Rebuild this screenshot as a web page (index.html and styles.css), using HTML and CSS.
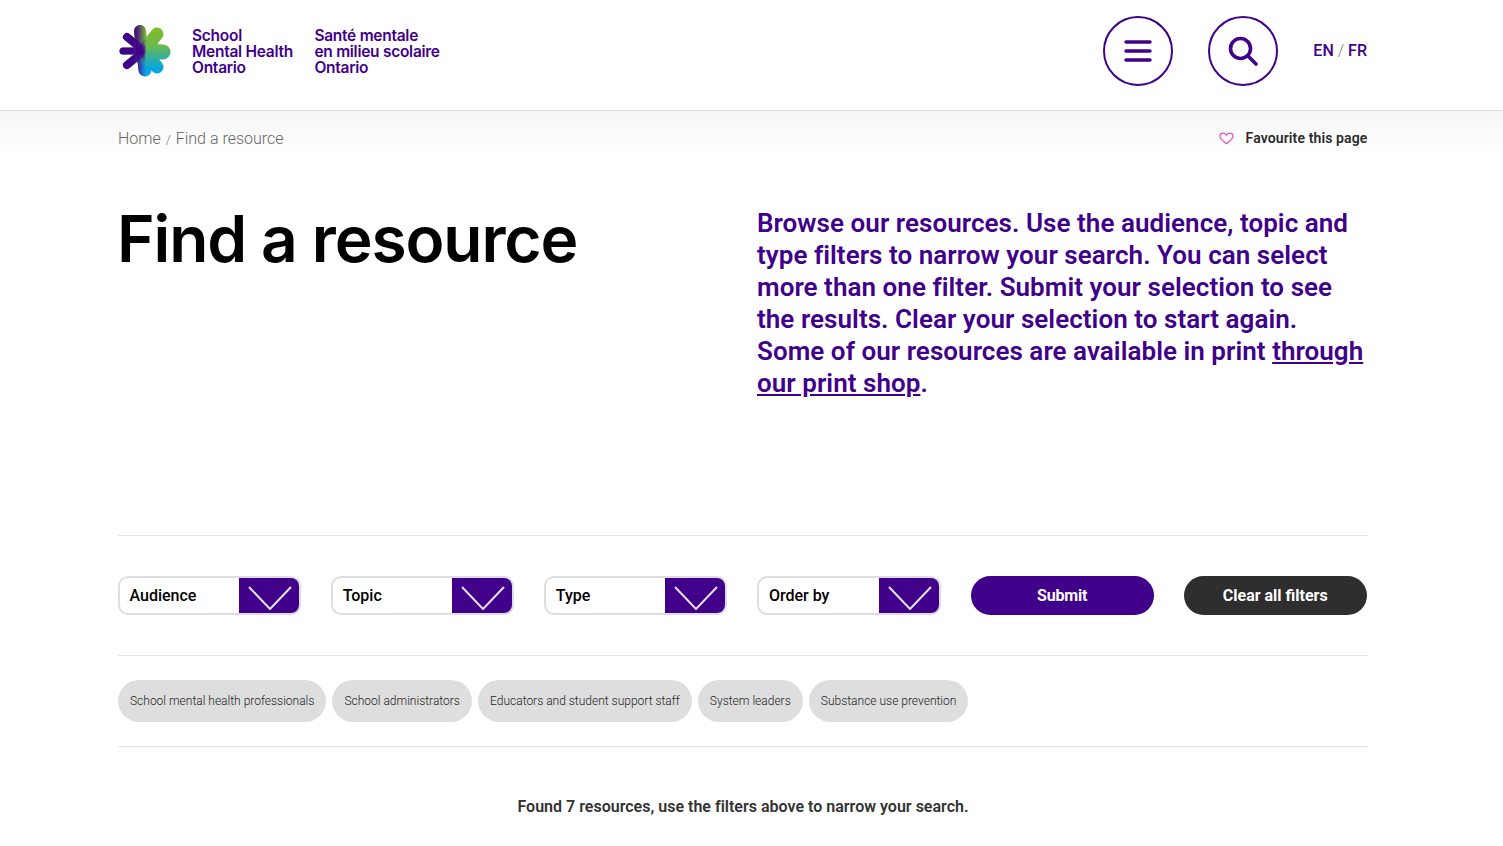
FILE: index.html
```html
<!DOCTYPE html>
<html lang="en">
<head>
<meta charset="utf-8">
<title>Find a resource</title>
<link rel="stylesheet" href="styles.css">
</head>
<body>
<header class="site-header">
  <a class="logo" href="#">
    <svg class="logo-mark" viewBox="0 0 52 52" aria-hidden="true">
      <defs>
        <linearGradient id="lg-base" gradientUnits="userSpaceOnUse" x1="30" y1="0" x2="30" y2="52">
          <stop offset="0" stop-color="#86bd24"/>
          <stop offset="0.4" stop-color="#6cb94a"/>
          <stop offset="0.62" stop-color="#35b09a"/>
          <stop offset="0.82" stop-color="#0ba6dc"/>
          <stop offset="1" stop-color="#0ba6e6"/>
        </linearGradient>
        <linearGradient id="lg-fade" gradientUnits="userSpaceOnUse" x1="0" y1="0" x2="52" y2="0">
          <stop offset="0.26" stop-color="#40008a"/>
          <stop offset="0.36" stop-color="#40008a" stop-opacity="0.8"/>
          <stop offset="0.52" stop-color="#40008a" stop-opacity="0"/>
        </linearGradient>
        <g id="petals" fill="none" stroke-linecap="round">
          <path d="M24 26 L4 26" stroke-width="7"/>
          <path d="M24 25 L8 12" stroke-width="8"/>
          <path d="M24 27 L8 40" stroke-width="8"/>
          <path d="M23 24 L21 6" stroke-width="12"/>
          <path d="M26 24 L38 9" stroke-width="13"/>
          <path d="M26 26 L44 27" stroke-width="15"/>
          <path d="M27 27 L38 42" stroke-width="13"/>
          <path d="M24 27 L26 45" stroke-width="13"/>
        </g>
      </defs>
      <use href="#petals" stroke="url(#lg-base)"/>
      <use href="#petals" stroke="url(#lg-fade)"/>
    </svg>
    <span class="logo-text">School<br>Mental Health<br>Ontario</span>
    <span class="logo-text logo-text-fr">Santé mentale<br>en milieu scolaire<br>Ontario</span>
  </a>
  <nav class="header-actions">
    <button class="round-btn" aria-label="Menu">
      <svg class="round-icon" viewBox="0 0 28 24" aria-hidden="true">
        <path d="M2 3h24M2 12h24M2 21h24" fill="none" stroke="currentColor" stroke-width="3.4" stroke-linecap="round"/>
      </svg>
    </button>
    <button class="round-btn" aria-label="Search">
      <svg class="round-icon search-icon" viewBox="0 0 30 30" aria-hidden="true">
        <circle cx="12.5" cy="12.5" r="10" fill="none" stroke="currentColor" stroke-width="3.6"/>
        <path d="M20 20l8 8" fill="none" stroke="currentColor" stroke-width="3.6" stroke-linecap="round"/>
      </svg>
    </button>
    <div class="lang"><a href="#">EN</a><span class="lang-sep">/</span><a href="#">FR</a></div>
  </nav>
</header>

<div class="crumb-band">
  <div class="crumb-row">
    <div class="crumbs">Home <span class="crumb-sep">/</span> Find a resource</div>
    <a class="favourite" href="#">
      <svg class="heart" viewBox="0 0 16 14" aria-hidden="true">
        <path d="M8 12.6 C3.5 9.4 1 7.3 1 4.6 C1 2.6 2.5 1.2 4.3 1.2 C5.7 1.2 7.1 2 8 3.5 C8.9 2 10.3 1.2 11.7 1.2 C13.5 1.2 15 2.6 15 4.6 C15 7.3 12.5 9.4 8 12.6 Z" fill="none" stroke="#e455bd" stroke-width="1.3"/>
      </svg>
      Favourite this page
    </a>
  </div>
</div>

<main class="page">
  <section class="hero">
    <h1>Find a resource</h1>
    <p class="intro">Browse our resources. Use the audience, topic and type filters to narrow your search. You can select more than one filter. Submit your selection to see the results. Clear your selection to start again. Some of our resources are available in print <a href="#">through our print shop</a>.</p>
  </section>

  <section class="filters">
    <div class="select"><span class="select-label">Audience</span><span class="select-arrow"><svg viewBox="0 0 44 24" aria-hidden="true"><path d="M1 1 L22 23 L43 1" fill="none" stroke="#e8e0f0" stroke-width="2"/></svg></span></div>
    <div class="select"><span class="select-label">Topic</span><span class="select-arrow"><svg viewBox="0 0 44 24" aria-hidden="true"><path d="M1 1 L22 23 L43 1" fill="none" stroke="#e8e0f0" stroke-width="2"/></svg></span></div>
    <div class="select"><span class="select-label">Type</span><span class="select-arrow"><svg viewBox="0 0 44 24" aria-hidden="true"><path d="M1 1 L22 23 L43 1" fill="none" stroke="#e8e0f0" stroke-width="2"/></svg></span></div>
    <div class="select"><span class="select-label">Order by</span><span class="select-arrow"><svg viewBox="0 0 44 24" aria-hidden="true"><path d="M1 1 L22 23 L43 1" fill="none" stroke="#e8e0f0" stroke-width="2"/></svg></span></div>
    <button class="pill pill-primary">Submit</button>
    <button class="pill pill-dark">Clear all filters</button>
  </section>

  <section class="chips">
    <span class="chip">School mental health professionals</span>
    <span class="chip">School administrators</span>
    <span class="chip">Educators and student support staff</span>
    <span class="chip">System leaders</span>
    <span class="chip">Substance use prevention</span>
  </section>

  <p class="result-count">Found 7 resources, use the filters above to narrow your search.</p>
</main>
</body>
</html>
```
FILE: styles.css
```css
* { box-sizing: border-box; }
html, body { margin: 0; padding: 0; background: #fff; overflow: hidden; }
body { font-family: Roboto, "Liberation Sans", sans-serif; color: #333; }
a { color: inherit; text-decoration: none; }

.site-header {
  height: 111px;
  padding: 0 135px 0 118px;
  display: flex;
  align-items: center;
  justify-content: space-between;
  border-bottom: 1px solid #dcdcdc;
}
.logo { display: flex; align-items: center; margin-bottom: 8px; }
.logo-mark { width: 52px; height: 52px; margin-left: 1px; overflow: visible; }
.logo-text {
  margin: 2px 0 0 21px;
  font-family: Inter, "Noto Sans", sans-serif;
  font-weight: 600;
  font-size: 15.5px;
  line-height: 16px;
  letter-spacing: -0.27px;
  color: #40008a;
  white-space: nowrap;
}
.logo-text-fr { margin-left: 21.5px; }

.header-actions { display: flex; align-items: center; margin-bottom: 9px; padding-right: 1px; }
.round-btn {
  width: 70px;
  height: 70px;
  margin-right: 35px;
  padding: 0;
  border: 2px solid #40008a;
  border-radius: 50%;
  background: #fff;
  color: #40008a;
  display: flex;
  align-items: center;
  justify-content: center;
}
.round-icon { width: 28px; height: 24px; }
.search-icon { width: 30px; height: 30px; }
.lang { font-weight: 500; font-size: 16px; color: #40008a; white-space: nowrap; }
.lang-sep { margin: 0 4px; font-weight: 300; color: #777; }

.crumb-band {
  height: 45px;
  padding: 0 135px 0 118px;
  background: linear-gradient(#f6f6f6, #fff);
}
.crumb-row {
  height: 100%;
  padding: 9px 0.5px 0 0;
  display: flex;
  align-items: center;
  justify-content: space-between;
}
.crumbs { font-weight: 300; font-size: 16px; color: #666; }
.crumb-sep { margin: 0 1px; font-size: 13px; color: #777; }
.favourite {
  display: flex;
  align-items: center;
  font-weight: 600;
  font-size: 14px;
  letter-spacing: 0.12px;
  color: #2b2b2b;
}
.heart { width: 15px; height: 13px; margin-right: 12px; }

.page { padding: 0 135px 0 118px; }
.hero {
  height: 380px;
  display: grid;
  grid-template-columns: 639px 1fr;
  border-bottom: 1px solid #e2e2e2;
}
h1 {
  margin: 47px 0 0 -1px;
  font-family: Inter, "Noto Sans", sans-serif;
  font-weight: 600;
  font-size: 64px;
  line-height: 72px;
  letter-spacing: -1.1px;
  color: #000;
  white-space: nowrap;
}
.intro {
  margin: 51px 0 0;
  font-weight: 600;
  font-size: 26px;
  line-height: 32px;
  letter-spacing: 0.05px;
  color: #40008a;
}
.intro a { text-decoration: underline; }

.filters {
  height: 120px;
  padding-right: 1.2px;
  display: grid;
  grid-template-columns: repeat(6, 1fr);
  column-gap: 30px;
  align-items: center;
  border-bottom: 1px solid #e2e2e2;
}
.select {
  height: 39px;
  display: flex;
  justify-content: space-between;
  border: 2px solid #dfdce4;
  border-radius: 10px;
  background: #fff;
  overflow: hidden;
}
.select-label {
  padding-left: 9.5px;
  font-weight: 500;
  font-size: 16px;
  line-height: 35px;
  color: #000;
}
.select-arrow {
  width: 60px;
  background: #40008a;
  display: flex;
  align-items: center;
  justify-content: center;
  padding: 4px 0 0 2px;
}
.select-arrow svg { width: 44px; height: 24px; }
.pill {
  height: 39px;
  border: 0;
  border-radius: 20px;
  color: #fff;
  font-family: Roboto, "Liberation Sans", sans-serif;
  font-weight: 700;
  font-size: 16px;
}
.pill-primary { background: #40008a; letter-spacing: -0.2px; }
.pill-dark { background: #2e2e2e; }

.chips {
  height: 91px;
  display: flex;
  align-items: center;
  gap: 6.1px;
  border-bottom: 1px solid #e2e2e2;
}
.chip {
  height: 42px;
  padding: 0 12px;
  display: flex;
  align-items: center;
  border-radius: 21px;
  background: #dedede;
  font-weight: 300;
  font-size: 12px;
  color: #222;
  white-space: nowrap;
}
.result-count {
  margin: 50px 0 0;
  text-align: center;
  font-weight: 600;
  font-size: 16px;
  line-height: 20px;
  letter-spacing: 0.01px;
  color: #333;
}
```
